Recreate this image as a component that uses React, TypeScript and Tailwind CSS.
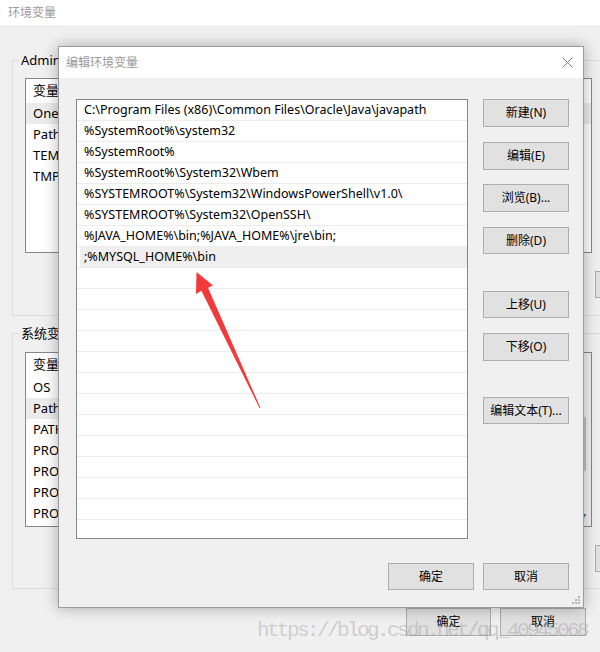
import React from "react";

const paths = [
  "C:\\Program Files (x86)\\Common Files\\Oracle\\Java\\javapath",
  "%SystemRoot%\\system32",
  "%SystemRoot%",
  "%SystemRoot%\\System32\\Wbem",
  "%SYSTEMROOT%\\System32\\WindowsPowerShell\\v1.0\\",
  "%SYSTEMROOT%\\System32\\OpenSSH\\",
  "%JAVA_HOME%\\bin;%JAVA_HOME%\\jre\\bin;",
  ";%MYSQL_HOME%\\bin",
];

const userVars = ["One", "Path", "TEM", "TMP"];
const sysVars = ["OS", "Path", "PATH", "PRO", "PRO", "PRO", "PRO"];

export default function App() {
  const rows = [...paths, ...Array(14).fill("")];

  return (
    <div className="relative h-[652px] w-[600px] overflow-hidden bg-[#f0f0f0] font-['Noto_Sans','Noto_Sans_CJK_SC',sans-serif] text-[12px] text-black">
      {/* background window */}
      <div className="flex h-[25px] items-center bg-white pl-[8px] text-[12px] text-[#9a9a9a]">
        环境变量
      </div>

      <div className="pl-[12px]">
        <fieldset className="-mr-[30px] mt-[27px] border border-[#dcdcdc] pb-[17px] pl-[12px]">
          <legend className="-ml-[6px] px-[2px] text-[13px] leading-[16px]">
            Administrator 的用户变量
          </legend>
          <div className="mt-[10px] h-[175px] w-[567px] border border-[#828790] bg-white text-[13px]">
            <div className="flex h-[24px] items-center pl-[7px]">变量</div>
            {userVars.map((v, i) => (
              <div
                key={i}
                className={`flex h-[21px] items-center pl-[7px] ${i === 0 ? "bg-[#ececec]" : ""}`}
              >
                {v}
              </div>
            ))}
          </div>
          <div className="mt-[18px] pl-[570px]">
            <WinButton className="h-[27px] w-[86px]">删除(L)</WinButton>
          </div>
        </fieldset>

        <fieldset className="-mr-[30px] mt-[9px] border border-[#dcdcdc] pb-[16px] pl-[12px]">
          <legend className="-ml-[6px] px-[2px] text-[13px] leading-[16px]">系统变量(S)</legend>
          <div className="mt-[11px] flex h-[175px] w-[567px] border border-[#828790] bg-white text-[13px]">
            <div className="flex-1">
              <div className="flex h-[24px] items-center pl-[7px]">变量</div>
              {sysVars.map((v, i) => (
                <div
                  key={i}
                  className={`flex h-[21px] items-center pl-[7px] ${i === 1 ? "bg-[#ececec]" : ""}`}
                >
                  {v}
                </div>
              ))}
            </div>
            <div className="flex w-[17px] flex-col items-center bg-[#f0f0f0]">
              <div className="mt-[64px] h-[54px] w-[7px] bg-[#c2c2c2]" />
              <div className="mt-auto mb-[5px] text-[8px] leading-none text-[#606060]">▼</div>
            </div>
          </div>
          <div className="mt-[18px] pl-[570px]">
            <WinButton className="h-[27px] w-[86px]">删除(D)</WinButton>
          </div>
        </fieldset>

        <div className="mt-[19px] flex justify-end gap-[9px] pr-[14px]">
          <WinButton className="h-[28px] w-[85px]">确定</WinButton>
          <WinButton className="h-[28px] w-[86px]">取消</WinButton>
        </div>
      </div>

      {/* edit dialog */}
      <div className="absolute left-[58px] top-[46px] flex h-[562px] w-[526px] flex-col border border-[#9c9c9c] bg-[#f0f0f0] shadow-[0_0_14px_rgba(0,0,0,0.3)]">
        <div className="flex h-[31px] items-center justify-between bg-white pl-[7px] pr-[10px]">
          <span className="text-[12px] text-[#9a9a9a]">编辑环境变量</span>
          <svg width="11" height="11" viewBox="0 0 11 11">
            <path d="M0.5 0.5 L10.5 10.5 M10.5 0.5 L0.5 10.5" stroke="#7a7a7a" strokeWidth="1" />
          </svg>
        </div>

        <div className="flex flex-1 flex-col pb-[17px] pl-[17px] pr-[14px] pt-[21px]">
          <div className="flex">
            <div className="h-[440px] w-[392px] overflow-hidden border border-[#828790] bg-white text-[12.5px]">
              {rows.map((text, i) => (
                <div key={i} className="h-[21px] border-b border-[#ececec] pl-[3px]">
                  <div
                    className={`flex h-full items-center pl-[4px] ${i === 7 ? "bg-[#efefef]" : ""}`}
                  >
                    {text}
                  </div>
                </div>
              ))}
            </div>

            <div className="ml-[15px] flex flex-col">
              <WinButton className="h-[28px] w-[86px]">新建(N)</WinButton>
              <WinButton className="mt-[15px] h-[28px] w-[86px]">编辑(E)</WinButton>
              <WinButton className="mt-[14px] h-[28px] w-[86px]">浏览(B)...</WinButton>
              <WinButton className="mt-[15px] h-[27px] w-[86px]">删除(D)</WinButton>
              <WinButton className="mt-[37px] h-[27px] w-[86px]">上移(U)</WinButton>
              <WinButton className="mt-[15px] h-[28px] w-[86px]">下移(O)</WinButton>
              <WinButton className="mt-[36px] h-[27px] w-[86px]">编辑文本(T)...</WinButton>
            </div>
          </div>

          <div className="mt-[24px] flex justify-end gap-[9px]">
            <WinButton className="h-[27px] w-[86px]">确定</WinButton>
            <WinButton className="h-[27px] w-[86px]">取消</WinButton>
          </div>
        </div>

        {/* size grip */}
        <svg className="absolute bottom-[2px] right-[2px]" width="9" height="9" viewBox="0 0 9 9">
          <rect x="6" y="0" width="2" height="2" fill="#b4b4b4" />
          <rect x="3" y="3" width="2" height="2" fill="#b4b4b4" />
          <rect x="6" y="3" width="2" height="2" fill="#b4b4b4" />
          <rect x="0" y="6" width="2" height="2" fill="#b4b4b4" />
          <rect x="3" y="6" width="2" height="2" fill="#b4b4b4" />
          <rect x="6" y="6" width="2" height="2" fill="#b4b4b4" />
        </svg>
      </div>

      {/* red annotation arrow */}
      <svg
        className="pointer-events-none absolute left-0 top-0"
        width="600"
        height="652"
        viewBox="0 0 600 652"
      >
        <polygon
          points="196.5,272 213,285.5 208,287.8 260.5,408 259.5,408 201.4,290.8 196,294"
          fill="#f23a3a"
        />
      </svg>

      {/* watermark */}
      <div className="pointer-events-none absolute left-[257px] top-[620px] font-['Liberation_Mono',monospace] text-[21px] leading-none tracking-[-2.6px] text-[rgba(150,150,150,0.4)]">
        https://blog.csdn.net/qq_40945068
      </div>
    </div>
  );
}

function WinButton({ children, className = "" }: { children: React.ReactNode; className?: string }) {
  return (
    <div
      className={`flex shrink-0 items-center justify-center border border-[#adadad] bg-[#e1e1e1] text-[12px] text-black ${className}`}
    >
      {children}
    </div>
  );
}
